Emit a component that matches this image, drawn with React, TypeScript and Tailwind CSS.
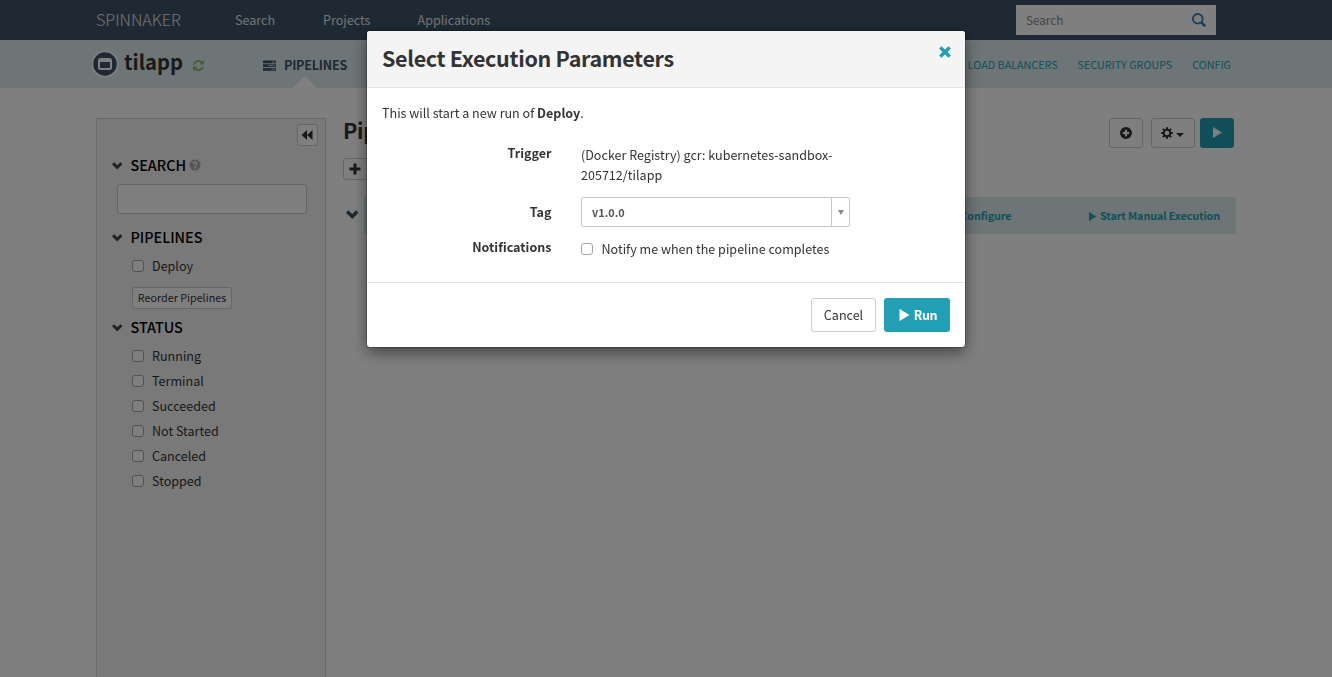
import React from "react";

type IconProps = { className?: string };

const Chevron = ({ className }: IconProps) => (
  <svg viewBox="0 0 12 8.500" className={className} fill="currentColor">
    <path d="M0 2.500 2.300.2 6 3.800 9.700.2 12 2.500 6 8.500z" />
  </svg>
);

const Play = ({ className }: IconProps) => (
  <svg viewBox="0 0 10 12" className={className} fill="currentColor">
    <path d="M0 0 10 6 0 12z" />
  </svg>
);

const Rewind = ({ className }: IconProps) => (
  <svg viewBox="0 0 12 12" className={className} fill="currentColor">
    <path d="M6 1v10L.5 6zM11.5 1v10L6 6z" />
  </svg>
);

const Plus = ({ className }: IconProps) => (
  <svg viewBox="0 0 12 12" className={className} fill="currentColor">
    <path d="M4.5.5h3v4h4v3h-4v4h-3v-4h-4v-3h4z" />
  </svg>
);

const PlusCircle = ({ className }: IconProps) => (
  <svg viewBox="0 0 12 12" className={className} fill="currentColor">
    <path
      fillRule="evenodd"
      d="M6 0a6 6 0 1 0 0 12A6 6 0 0 0 6 0zM4.9 2.7h2.2v2.2h2.2v2.2H7.1v2.2H4.9V7.1H2.7V4.9h2.2z"
    />
  </svg>
);

const Help = ({ className }: IconProps) => (
  <svg viewBox="0 0 12 12" className={className}>
    <circle cx="6" cy="6" r="5.5" fill="#aaa" />
    <path d="M4.2 4.8C4.2 2.4 7.8 2.4 7.8 4.7 7.8 6 6.1 5.9 6.1 7.4" fill="none" stroke="#f2f2f2" strokeWidth="1.5" />
    <path d="M5.3 8.1h1.5v1.5H5.3z" fill="#f2f2f2" />
  </svg>
);

const Cog = ({ className }: IconProps) => (
  <svg viewBox="0 0 12 12" className={className}>
    <circle cx="6" cy="6" r="3.3" fill="none" stroke="currentColor" strokeWidth="2" />
    <path
      d="M6 .2v1.9M6 9.9v1.9M.2 6h1.9M9.9 6h1.9M1.9 1.9l1.4 1.4M8.7 8.7l1.4 1.4M1.9 10.1l1.4-1.4M8.7 3.3l1.4-1.4"
      stroke="currentColor"
      strokeWidth="2"
    />
  </svg>
);

const Magnifier = ({ className }: IconProps) => (
  <svg viewBox="0 0 14 14" className={className} fill="none" stroke="currentColor">
    <circle cx="5.8" cy="5.8" r="4.8" strokeWidth="1.9" />
    <path d="m9.2 9.200 4 4" strokeWidth="2.6" />
  </svg>
);

const Tasks = ({ className }: IconProps) => (
  <svg viewBox="0 0 13 11" className={className}>
    <path d="M0 .5h13v2.8H0zM0 4.2h13V7H0zM0 7.9h13v2.8H0z" fill="currentColor" />
    <path d="M9 1.4h3v1H9zM5 5.1h7v1H5zM8.5 8.8H12v1H8.5z" fill="#b4c4c9" />
  </svg>
);

const Refresh = ({ className }: IconProps) => (
  <svg viewBox="0 0 1536 1536" className={className} fill="currentColor">
    <path d="M1511 928q0 5-1 7-64 268-268 434.500T764 1536q-146 0-282.500-55T238 1324l-129 129q-19 19-45 19t-45-19-19-45V960q0-26 19-45t45-19h448q26 0 45 19t19 45-19 45l-137 137q71 66 161 102t187 36q134 0 250-65t186-179q11-17 53-117 8-23 30-23h192q13 0 22.500 9.500t9.500 22.500zM1536 128v448q0 26-19 45t-45 19h-448q-26 0-45-19t-19-45 19-45l138-138Q969 256 768 256q-134 0-250 65T332 500q-11 17-53 117-8 23-30 23H50q-13 0-22.500-9.500T18 608v-7q65-268 270-434.500T768 0q146 0 284 55.500T1297 212l130-129q19-19 45-19t45 19 19 45z" />
  </svg>
);

const Close = ({ className }: IconProps) => (
  <svg viewBox="0 0 12 12" className={className} fill="currentColor">
    <path d="M2.500.200 6 3.400 9.500.200 11.900 2.600 8.600 6 11.900 9.400 9.500 11.800 6 8.600 2.500 11.800.100 9.400 3.400 6 .100 2.600z" />
  </svg>
);

const Checkbox = () => (
  <span className="block h-3 w-3 shrink-0 rounded-[3px] border border-[#a4a4a4] bg-white" />
);

const SectionTitle = ({ title, help }: { title: string; help?: boolean }) => (
  <div className="flex h-5 items-center pl-[15px]">
    <Chevron className="mt-px h-[7.500px] w-[10.500px] text-[#444]" />
    <span className="ml-[8px] text-[14.350px] font-medium leading-5 text-black">{title}</span>
    {help && <Help className="ml-[3px] h-3 w-3" />}
  </div>
);

const Option = ({ label }: { label: string }) => (
  <div className="flex h-[25px] items-center gap-2 pl-[35px]">
    <Checkbox />
    <span className="leading-5">{label}</span>
  </div>
);

const statuses = ["Running", "Terminal", "Succeeded", "Not Started", "Canceled", "Stopped"];

function TopBar() {
  return (
    <div className="flex h-10 items-center bg-[#3c5268] pl-24 pr-[116px] text-[#e6e6e6]">
      <span className="-mt-[2px] w-[139px] text-[16.100px] font-light leading-5">SPINNAKER</span>
      <span className="w-[88px]">Search</span>
      <span className="w-[94.500px]">Projects</span>
      <span>Applications</span>
      <div className="ml-auto flex h-[30px] w-[200px] items-center justify-between bg-white pl-[10px] pr-[10px]">
        <span className="text-[11.700px] text-[#888]">Search</span>
        <Magnifier className="h-[14px] w-[14px] text-[#337ab7]" />
      </div>
    </div>
  );
}

function AppBar() {
  return (
    <div className="relative flex h-12 items-center bg-[#dbebef] pl-[91px] pr-[101px]">
      <svg viewBox="0 0 28 28" className="h-7 w-7">
        <circle cx="14" cy="14" r="12.700" fill="#3c5268" stroke="#fff" strokeWidth="1.800" />
        <rect x="8" y="9" width="12" height="10" rx="1.500" fill="none" stroke="#fff" strokeWidth="2" />
        <path d="M9 10h10v2H9z" fill="#fff" />
      </svg>
      <span className="-mt-[4px] ml-[5px] w-[69px] text-[20.200px] font-bold leading-6 text-[#333]">tilapp</span>
      <Refresh className="mt-[3px] h-[11px] w-[11px] text-[#8fb36b]" />
      <Tasks className="ml-[59px] mt-[2px] h-[11px] w-[13px] text-[#3c5268]" />
      <span className="ml-2 mt-[2px] text-[12.550px] font-bold tracking-[-0.200px] text-[#3c5268]">PIPELINES</span>
      <div className="ml-auto flex gap-5 text-[10.750px] leading-[21px] text-[#229fb5]">
        <span>LOAD BALANCERS</span>
        <span>SECURITY GROUPS</span>
        <span>CONFIG</span>
      </div>
      <svg viewBox="0 0 24 12" className="absolute bottom-0 left-[293px] h-3 w-6">
        <path d="M0 12 12 0l12 12z" fill="#fff" />
      </svg>
    </div>
  );
}

function Sidebar() {
  return (
    <div className="flex w-[230px] shrink-0 flex-col border border-b-0 border-[#d5d5d5] bg-[#f2f2f2]">
      <div className="flex justify-end pr-[7px] pt-[5px]">
        <div className="flex h-[22px] w-[21px] items-center justify-center rounded-[3px] border border-[#ccc] bg-white pr-px text-[#333]">
          <Rewind className="h-3 w-3" />
        </div>
      </div>
      <div className="mt-[9px]">
        <SectionTitle title="SEARCH" help />
      </div>
      <div className="ml-5 mt-[9px] h-[30px] w-[190px] rounded-[3px] border border-[#ccc] bg-white" />
      <div className="mt-[13px]">
        <SectionTitle title="PIPELINES" />
      </div>
      <div className="mt-[6px]">
        <Option label="Deploy" />
      </div>
      <div className="ml-[35px] mt-[9px] flex h-[22px] w-[100px] items-center justify-center rounded-[3px] border border-[#ccc] bg-white text-[10.750px]">
        Reorder Pipelines
      </div>
      <div className="mt-[8px]">
        <SectionTitle title="STATUS" />
      </div>
      <div className="mt-[6px]">
        {statuses.map((s) => (
          <Option key={s} label={s} />
        ))}
      </div>
    </div>
  );
}

function Main() {
  return (
    <div className="ml-[17px] flex-1">
      <div className="flex h-[78px] justify-between pr-[2px]">
        <div>
          <h2 className="-mt-px text-[21.500px] font-bold leading-[26px] tracking-[-0.3px] text-[#333]">Pipelines</h2>
          <div className="mt-[15px] flex h-[22px] w-[60px] items-center rounded-[3px] border border-[#ccc] bg-white pl-[4.500px] text-[#333]">
            <Plus className="h-3 w-3" />
          </div>
        </div>
        <div className="flex h-[30px] text-[#333]">
          <div className="flex w-[34px] items-center justify-center rounded-[3px] border border-[#ccc] bg-white pb-px">
            <PlusCircle className="h-3 w-3" />
          </div>
          <div className="ml-2 flex w-[44px] items-center justify-center gap-[3px] rounded-[3px] border border-[#ccc] bg-white pb-px pr-px">
            <Cog className="h-3 w-3" />
            <svg viewBox="0 0 8 4" className="mt-[4px] h-1 w-2">
              <path d="M0 0h8L4 4z" fill="currentColor" />
            </svg>
          </div>
          <div className="ml-[5px] flex w-[34px] items-center justify-center rounded-[3px] bg-[#229fb5] pb-px text-white">
            <Play className="h-[11px] w-[9px]" />
          </div>
        </div>
      </div>
      <div className="mt-px flex h-[37px] items-center text-[#3c5268]">
        <Chevron className="-mt-[2px] ml-[3px] h-[9px] w-[12.500px]" />
        <div className="ml-[5.500px] flex h-[37px] flex-1 items-center justify-end bg-[#dbebef] pr-4 text-[10.800px] font-bold leading-[18px] tracking-[-0.120px] text-[#229fb5]">
          <span className="-mt-[2px] mr-[78px]">Configure</span>
          <Play className="mr-[3px] mt-[2px] h-[9px] w-[7.500px]" />
          <span className="-mt-[2px]">Start Manual Execution</span>
        </div>
      </div>
    </div>
  );
}

function Dialog() {
  return (
    <div className="fixed inset-0 flex items-start bg-black/50 pl-[367px] pt-[31px]">
      <div className="h-[316px] w-[598px] overflow-hidden rounded-[3px] bg-white shadow-[0_5px_15px_rgba(0,0,0,0.5),0_0_0_1px_rgba(0,0,0,0.2)]">
        <div className="flex h-[57px] justify-between border-b border-[#e5e5e5] bg-[#f4f4f4] pl-[15px] pr-[14px]">
          <h3 className="mt-[13px] text-[21.500px] font-bold leading-[28px] tracking-[-0.330px] text-[#333]">
            Select Execution Parameters
          </h3>
          <Close className="mt-[15px] h-3 w-3 text-[#229fb5]" />
        </div>
        <div className="h-[195px] border-b border-[#e5e5e5] pl-[15px] pt-[15px]">
          <p>
            This will start a new run of <b>Deploy</b>.
          </p>
          <div className="mt-[22px] flex">
            <b className="-mt-[2px] w-[169.500px] text-right">Trigger</b>
            <span className="ml-[29.500px] w-[269px]">
              (Docker Registry) gcr: kubernetes-sandbox-<br />205712/tilapp
            </span>
          </div>
          <div className="mt-[12px] flex items-center">
            <b className="w-[169.500px] text-right">Tag</b>
            <div className="ml-[29.500px] flex h-[30px] w-[269px] rounded-[2px] border border-[#c6c6c6] bg-white text-[#555]">
              <b className="flex flex-1 items-center pl-[10px] text-[10.900px]">v1.0.0</b>
              <div className="flex w-[19px] items-center justify-center border-l border-[#c6c6c6] pr-px -mr-px">
                <svg viewBox="0 0 6 5" className="h-[5px] w-[6px]">
                  <path d="M0 0h6L3 5z" fill="#888" />
                </svg>
              </div>
            </div>
          </div>
          <div className="mt-[12px] flex items-center">
            <b className="-mt-[4px] w-[169.500px] text-right">Notifications</b>
            <div className="ml-[29.500px] flex items-center gap-[8.500px]">
              <Checkbox />
              <span>Notify me when the pipeline completes</span>
            </div>
          </div>
        </div>
        <div className="flex justify-end gap-2 pr-[15px] pt-[15px]">
          <div className="flex h-[34px] w-[65px] items-center justify-center rounded-[3px] border border-[#ccc]">
            Cancel
          </div>
          <div className="flex h-[34px] w-[66px] items-center justify-center gap-1 rounded-[3px] bg-[#229fb5] pl-[2px] font-bold tracking-[-0.400px] text-white">
            <Play className="h-3 w-[11px]" />
            Run
          </div>
        </div>
      </div>
    </div>
  );
}

export default function App() {
  return (
    <div className="flex h-screen flex-col overflow-hidden bg-white font-['Noto_Sans_CJK_SC','Noto_Sans',sans-serif] text-[12.550px] leading-5 text-[#333]">
      <TopBar />
      <AppBar />
      <div className="flex flex-1 pl-24 pr-24 pt-[30px]">
        <Sidebar />
        <Main />
      </div>
      <Dialog />
    </div>
  );
}
